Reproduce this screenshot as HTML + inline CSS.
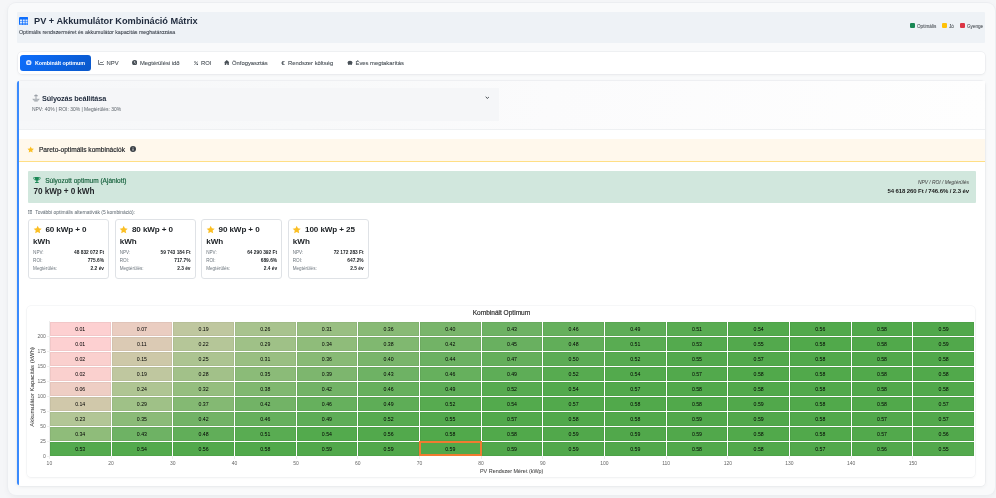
<!DOCTYPE html>
<html><head><meta charset="utf-8">
<style>
*{box-sizing:border-box;margin:0;padding:0}
html,body{width:996px;height:498px;overflow:hidden;background:#f5f6f8;font-family:"Liberation Sans",sans-serif;color:#212529}
.abs{position:absolute}
.t{position:absolute;white-space:nowrap;line-height:1}
#outer{position:absolute;left:7.5px;top:3px;width:987px;height:492px;background:#f9fafb;border-radius:8px;box-shadow:0 0 0 1px #eceef1,0 2px 6px rgba(0,0,0,0.05)}
#hdr{position:absolute;left:17px;top:12px;width:968px;height:30.5px;background:#eef2f6;border-radius:1px}
#nav{position:absolute;left:17.5px;top:52px;width:967.5px;height:22px;background:#fff;border-radius:4px;box-shadow:0 0 0 0.5px #e6e8eb,0 1px 3px rgba(0,0,0,0.06)}
#btn{position:absolute;left:20.3px;top:54.5px;width:70.7px;height:16px;border-radius:3px;background:linear-gradient(135deg,#0d6efd,#0a58ca)}
.tab{position:absolute;top:61.0px;font-size:5.85px;color:#495057;line-height:1;white-space:nowrap;-webkit-text-stroke:0.1px #495057}
#main{position:absolute;left:17px;top:80.5px;width:968px;height:405px;background:#fff;border-radius:4px;box-shadow:0 0 0 0.5px #e6e8eb,0 1px 4px rgba(0,0,0,0.06);overflow:hidden}
#mainbar{position:absolute;left:17px;top:81px;width:2px;height:404px;background:#3b8bfd;border-radius:2px 0 0 2px}
#wt{position:absolute;left:19px;top:80.5px;width:966px;height:49.3px;background:linear-gradient(100deg,#f6f7f9 0%,#f8f9fa 30%,#fbfbfc 55%,#fefefe 100%);border-bottom:0.6px solid #eef0f2}
#wpanel{position:absolute;left:19px;top:87.6px;width:480px;height:33.2px;background:#f5f6f8}
#pareto{position:absolute;left:19px;top:138.7px;width:966px;height:23.4px;background:#fff8ec;border-bottom:1px solid #ffdf85}
#green{position:absolute;left:27.7px;top:170.8px;width:948px;height:31.8px;background:#d1e7dd;border-radius:1px}
.acard{position:absolute;top:219px;width:81.3px;height:59.8px;background:#fff;border:0.7px solid #dfe2e6;border-radius:3px}
.astar{position:absolute;left:3.7px;top:5.0px;width:9.4px;height:9.4px}
.at1{position:absolute;left:16.4px;top:6px;font-size:8.1px;letter-spacing:-0.1px;font-weight:bold;line-height:1;white-space:nowrap;color:#212529}
.at2{position:absolute;left:4.1px;top:17.5px;font-size:8.1px;font-weight:bold;line-height:1;white-space:nowrap;color:#212529}
.arow{position:absolute;left:4.1px;right:4.3px;height:6px;font-size:4.6px;line-height:1;color:#6c757d;white-space:nowrap}
.arow span{position:absolute;left:0;top:0}
.arow b{position:absolute;right:0;top:0;color:#212529;font-weight:bold;font-size:4.82px;top:-0.1px}
#chart{position:absolute;left:27.2px;top:305.5px;width:948px;height:171px;background:#fff;border-radius:4px;box-shadow:0 0 0 0.5px #eef0f2,0 1px 3px rgba(0,0,0,0.05)}
.cell{position:absolute;border:0.8px solid;display:flex;align-items:center;justify-content:center}
.cell span{font-size:5.2px;color:#000;line-height:1;white-space:nowrap;position:relative;top:0.5px;color:#000}
.xt{position:absolute;top:460.8px;width:20px;text-align:center;font-size:5px;color:#666;line-height:1}
.xtick{position:absolute;top:455.7px;width:0.5px;height:3px;background:#eee}
.yt{position:absolute;left:26px;width:19.8px;text-align:right;font-size:5px;color:#666;line-height:1}
.ytick{position:absolute;left:46.5px;width:3.5px;height:0.5px;background:#eee}
#wrap{position:absolute;left:0;top:0;width:996px;height:498px;will-change:transform}
</style></head><body><div id="wrap">
<div id="outer"></div>
<div id="hdr"></div>
<svg class="abs" style="left:18.9px;top:16.9px;width:9.5px;height:8.2px" viewBox="0 0 19 16"><rect x="0" y="0" width="19" height="16" rx="2.5" fill="#0d6efd"/><g fill="#fff"><rect x="2" y="5" width="4" height="2.5"/><rect x="7.5" y="5" width="4" height="2.5"/><rect x="13" y="5" width="4" height="2.5"/><rect x="2" y="9" width="4" height="2.5"/><rect x="7.5" y="9" width="4" height="2.5"/><rect x="13" y="9" width="4" height="2.5"/><rect x="2" y="13" width="4" height="1.5"/><rect x="7.5" y="13" width="4" height="1.5"/><rect x="13" y="13" width="4" height="1.5"/></g></svg>
<div class="t" id="title" style="left:33.6px;top:16.0px;font-size:9.8px;font-weight:bold;color:#1f2a3c;transform:scaleX(0.94);transform-origin:0 0">PV + Akkumulátor Kombináció Mátrix</div>
<div class="t" id="sub" style="left:19px;top:29.9px;font-size:5.3px;color:#2f3640;-webkit-text-stroke:0.05px #2f3640;letter-spacing:-0.01px">Optimális rendszerméret és akkumulátor kapacitás meghatározása</div>
<div class="abs" style="left:910px;top:23.2px;width:4.8px;height:4.8px;background:#198754;border-radius:1.1px"></div>
<div class="t" style="left:917px;top:24.6px;font-size:4.62px;color:#343a40;-webkit-text-stroke:0.03px #343a40">Optimális</div>
<div class="abs" style="left:942px;top:23.2px;width:4.8px;height:4.8px;background:#ffc107;border-radius:1.1px"></div>
<div class="t" style="left:949px;top:24.6px;font-size:4.62px;color:#343a40;-webkit-text-stroke:0.03px #343a40">Jó</div>
<div class="abs" style="left:960px;top:23.2px;width:4.8px;height:4.8px;background:#dc3545;border-radius:1.1px"></div>
<div class="t" style="left:967px;top:24.6px;font-size:4.62px;color:#343a40;-webkit-text-stroke:0.03px #343a40">Gyenge</div>

<div id="nav"></div>
<div id="btn"></div>
<svg class="abs" style="left:26px;top:59.8px;width:5.5px;height:5.5px" viewBox="0 0 10 10"><circle cx="5" cy="5" r="5" fill="#d6e4ff"/><circle cx="5" cy="5" r="2.2" fill="#4d8ffd"/></svg>
<div class="tab" style="left:34.9px;top:60.8px;color:#fff;font-weight:bold;font-size:5.4px;-webkit-text-stroke:0;letter-spacing:-0.03px">Kombinált optimum</div>
<svg class="abs" style="left:98px;top:59.8px;width:6px;height:5px" viewBox="0 0 12 10"><path d="M1 0v9h11" stroke="#495057" stroke-width="1.4" fill="none"/><path d="M3 7l3-3 2 2 3-3" stroke="#495057" stroke-width="1.4" fill="none"/></svg>
<div class="tab" style="left:106.6px">NPV</div>
<svg class="abs" style="left:131.8px;top:59.5px;width:5.3px;height:5.3px" viewBox="0 0 10 10"><circle cx="5" cy="5" r="5" fill="#495057"/><path d="M5 2v3.2l2 1.3" stroke="#fff" stroke-width="1.2" fill="none"/></svg>
<div class="tab" style="left:139.9px">Megtérülési idő</div>
<svg class="abs" style="left:193.8px;top:60.6px;width:4.3px;height:4.3px" viewBox="0 0 10 10"><path d="M9 1L1 9" stroke="#495057" stroke-width="1.8"/><circle cx="2.3" cy="2.3" r="1.9" fill="#495057"/><circle cx="7.7" cy="7.7" r="1.9" fill="#495057"/></svg>
<div class="tab" style="left:201px">ROI</div>
<svg class="abs" style="left:223.6px;top:59.6px;width:5.6px;height:5.2px" viewBox="0 0 12 11"><path d="M6 0L0 5.5h1.6V11h3.2V7.5h2.4V11h3.2V5.5H12z" fill="#495057"/></svg>
<div class="tab" style="left:232px">Önfogyasztás</div>
<div class="tab" style="left:281.5px;font-weight:bold">€</div>
<div class="tab" style="left:288px">Rendszer költség</div>
<svg class="abs" style="left:347px;top:59.8px;width:6px;height:5px" viewBox="0 0 12 10"><ellipse cx="6" cy="5.5" rx="5" ry="4" fill="#495057"/><rect x="2.5" y="7" width="2" height="3" fill="#495057"/><rect x="7.5" y="7" width="2" height="3" fill="#495057"/></svg>
<div class="tab" style="left:355.5px">Éves megtakarítás</div>

<div id="main"></div>
<div id="wt"></div>
<div id="wpanel"></div>
<div id="mainbar"></div>
<svg class="abs" style="left:32px;top:94px;width:8px;height:8px" viewBox="0 0 16 16"><path d="M8 1.5v10M4 3.5h8" stroke="#7d848c" stroke-width="1.3" fill="none"/><circle cx="8" cy="2" r="1.2" fill="#7d848c"/><path d="M1.5 10.5c1 3.5 12 3.5 13 0z" fill="#d5d9de" stroke="#7d848c" stroke-width="1"/><path d="M4.5 13.5h7v1.5h-7z" fill="#9aa0a6"/></svg>
<div class="t" id="wtitle" style="left:42px;top:95.2px;font-size:7.3px;letter-spacing:-0.15px;font-weight:bold;color:#1f2a3c">Súlyozás beállítása</div>
<div class="t" id="wsub" style="left:32px;top:108.2px;font-size:4.95px;color:#5f666d;-webkit-text-stroke:0.01px #5f666d">NPV: 40% | ROI: 30% | Megtérülés: 30%</div>
<svg class="abs" style="left:484.5px;top:96px;width:4.8px;height:3.4px" viewBox="0 0 8 6"><path d="M1 1.2l3 3.3 3-3.3" stroke="#343a40" stroke-width="1.5" fill="none"/></svg>

<div id="pareto"></div>
<svg class="abs" style="left:27.3px;top:145.9px;width:7.4px;height:7.4px" viewBox="0 0 24 24"><path d="M12 1.8l3.1 6.6 7.2.9-5.3 5 1.4 7.1L12 17.9l-6.4 3.5 1.4-7.1-5.3-5 7.2-.9z" fill="#fbbf24"/></svg>
<div class="t" id="ptitle" style="left:38.9px;top:147.1px;font-size:6.6px;color:#1c1f23;-webkit-text-stroke:0.16px #1c1f23">Pareto-optimális kombinációk</div>
<svg class="abs" style="left:129.9px;top:146.4px;width:6px;height:6px" viewBox="0 0 10 10"><circle cx="5" cy="5" r="5" fill="#3a3f45"/><rect x="4.3" y="4.2" width="1.4" height="3.6" fill="#fff"/><circle cx="5" cy="2.7" r="0.8" fill="#fff"/></svg>

<div id="green"></div>
<svg class="abs" style="left:33.3px;top:176.8px;width:7.8px;height:6.2px" viewBox="0 0 16 12.5"><path d="M4 0h8v4.2a4 4 0 0 1-8 0z" fill="#198754"/><path d="M4.2 1.3H1.2v1.3c0 1.7 1.5 3 3.3 3M11.8 1.3h3v1.3c0 1.7-1.5 3-3.3 3" stroke="#198754" stroke-width="1.5" fill="none"/><rect x="6.8" y="7.5" width="2.4" height="2.6" fill="#198754"/><rect x="4.3" y="10" width="7.4" height="2.5" rx="0.6" fill="#198754"/></svg>
<div class="t" id="gtitle" style="left:45.2px;top:177.7px;font-size:6.5px;color:#135f3a;-webkit-text-stroke:0.16px #135f3a">Súlyozott optimum (Ajánlott)</div>
<div class="t" id="gval" style="left:33.6px;top:187.7px;font-size:8.2px;letter-spacing:-0.1px;font-weight:bold;color:#25282c">70 kWp + 0 kWh</div>
<div class="t" id="grl" style="right:27px;top:181px;font-size:4.9px;color:#444;font-style:italic;-webkit-text-stroke:0.03px #444">NPV / ROI / Megtérülés</div>
<div class="t" id="grv" style="right:27px;top:188.3px;font-size:6px;font-weight:bold;color:#1a1a1a;letter-spacing:-0.09px">54 618 260 Ft / 746.6% / 2.3 év</div>

<svg class="abs" style="left:27.7px;top:210.3px;width:4.4px;height:3.8px" viewBox="0 0 9 7"><g fill="#6c757d"><rect x="0" y="0" width="2" height="1.6"/><rect x="3" y="0" width="6" height="1.6"/><rect x="0" y="2.7" width="2" height="1.6"/><rect x="3" y="2.7" width="6" height="1.6"/><rect x="0" y="5.4" width="2" height="1.6"/><rect x="3" y="5.4" width="6" height="1.6"/></g></svg>
<div class="t" id="alt" style="left:35.2px;top:210.6px;font-size:4.95px;color:#6c757d;-webkit-text-stroke:0.05px #6c757d">További optimális alternatívák (5 kombináció):</div>
<div class="acard" style="left:28.00px">
  <svg class="astar" viewBox="0 0 24 24"><path d="M12 1.8l3.1 6.6 7.2.9-5.3 5 1.4 7.1L12 17.9l-6.4 3.5 1.4-7.1-5.3-5 7.2-.9z" fill="#fbbf24"/></svg>
  <div class="at1">60 kWp + 0</div><div class="at2">kWh</div>
  <div class="arow" style="top:31.2px"><span>NPV:</span><b>48 832 072 Ft</b></div>
  <div class="arow" style="top:39.2px"><span>ROI:</span><b>775.6%</b></div>
  <div class="arow" style="top:47.2px"><span>Megtérülés:</span><b>2.2 év</b></div>
</div>
<div class="acard" style="left:114.55px">
  <svg class="astar" viewBox="0 0 24 24"><path d="M12 1.8l3.1 6.6 7.2.9-5.3 5 1.4 7.1L12 17.9l-6.4 3.5 1.4-7.1-5.3-5 7.2-.9z" fill="#fbbf24"/></svg>
  <div class="at1">80 kWp + 0</div><div class="at2">kWh</div>
  <div class="arow" style="top:31.2px"><span>NPV:</span><b>59 743 184 Ft</b></div>
  <div class="arow" style="top:39.2px"><span>ROI:</span><b>717.7%</b></div>
  <div class="arow" style="top:47.2px"><span>Megtérülés:</span><b>2.3 év</b></div>
</div>
<div class="acard" style="left:201.10px">
  <svg class="astar" viewBox="0 0 24 24"><path d="M12 1.8l3.1 6.6 7.2.9-5.3 5 1.4 7.1L12 17.9l-6.4 3.5 1.4-7.1-5.3-5 7.2-.9z" fill="#fbbf24"/></svg>
  <div class="at1">90 kWp + 0</div><div class="at2">kWh</div>
  <div class="arow" style="top:31.2px"><span>NPV:</span><b>64 290 392 Ft</b></div>
  <div class="arow" style="top:39.2px"><span>ROI:</span><b>689.6%</b></div>
  <div class="arow" style="top:47.2px"><span>Megtérülés:</span><b>2.4 év</b></div>
</div>
<div class="acard" style="left:287.65px">
  <svg class="astar" viewBox="0 0 24 24"><path d="M12 1.8l3.1 6.6 7.2.9-5.3 5 1.4 7.1L12 17.9l-6.4 3.5 1.4-7.1-5.3-5 7.2-.9z" fill="#fbbf24"/></svg>
  <div class="at1">100 kWp + 25</div><div class="at2">kWh</div>
  <div class="arow" style="top:31.2px"><span>NPV:</span><b>72 172 283 Ft</b></div>
  <div class="arow" style="top:39.2px"><span>ROI:</span><b>647.2%</b></div>
  <div class="arow" style="top:47.2px"><span>Megtérülés:</span><b>2.5 év</b></div>
</div>

<div id="chart"></div>
<div class="t" id="ctitle" style="left:472.7px;top:310.2px;font-size:6.55px;color:#333;-webkit-text-stroke:0.2px #333">Kombinált Optimum</div>
<div class="cell" style="left:49.90px;top:321.70px;width:60.67px;height:13.99px;background:rgb(253,208,209);border-color:rgb(242,199,200)"><span>0.01</span></div>
<div class="cell" style="left:49.90px;top:336.69px;width:60.67px;height:13.99px;background:rgb(253,208,209);border-color:rgb(242,199,200)"><span>0.01</span></div>
<div class="cell" style="left:49.90px;top:351.68px;width:60.67px;height:13.99px;background:rgb(250,208,206);border-color:rgb(240,199,197)"><span>0.02</span></div>
<div class="cell" style="left:49.90px;top:366.67px;width:60.67px;height:13.99px;background:rgb(250,208,206);border-color:rgb(240,199,197)"><span>0.02</span></div>
<div class="cell" style="left:49.90px;top:381.66px;width:60.67px;height:13.99px;background:rgb(238,206,196);border-color:rgb(228,197,188)"><span>0.06</span></div>
<div class="cell" style="left:49.90px;top:396.64px;width:60.67px;height:13.99px;background:rgb(208,200,170);border-color:rgb(199,192,163)"><span>0.14</span></div>
<div class="cell" style="left:49.90px;top:411.63px;width:60.67px;height:13.99px;background:rgb(178,198,150);border-color:rgb(170,190,144)"><span>0.23</span></div>
<div class="cell" style="left:49.90px;top:426.62px;width:60.67px;height:13.99px;background:rgb(143,188,122);border-color:rgb(137,180,117)"><span>0.34</span></div>
<div class="cell" style="left:49.90px;top:441.61px;width:60.67px;height:13.99px;background:rgb(84,170,78);border-color:rgb(80,163,74)"><span>0.53</span></div>
<div class="cell" style="left:111.57px;top:321.70px;width:60.67px;height:13.99px;background:rgb(234,205,193);border-color:rgb(224,196,185)"><span>0.07</span></div>
<div class="cell" style="left:111.57px;top:336.69px;width:60.67px;height:13.99px;background:rgb(219,202,180);border-color:rgb(210,193,172)"><span>0.11</span></div>
<div class="cell" style="left:111.57px;top:351.68px;width:60.67px;height:13.99px;background:rgb(205,200,168);border-color:rgb(196,192,161)"><span>0.15</span></div>
<div class="cell" style="left:111.57px;top:366.67px;width:60.67px;height:13.99px;background:rgb(191,199,159);border-color:rgb(183,191,152)"><span>0.19</span></div>
<div class="cell" style="left:111.57px;top:381.66px;width:60.67px;height:13.99px;background:rgb(175,197,147);border-color:rgb(168,189,141)"><span>0.24</span></div>
<div class="cell" style="left:111.57px;top:396.64px;width:60.67px;height:13.99px;background:rgb(159,193,135);border-color:rgb(152,185,129)"><span>0.29</span></div>
<div class="cell" style="left:111.57px;top:411.63px;width:60.67px;height:13.99px;background:rgb(139,187,120);border-color:rgb(133,179,115)"><span>0.35</span></div>
<div class="cell" style="left:111.57px;top:426.62px;width:60.67px;height:13.99px;background:rgb(110,178,100);border-color:rgb(105,170,96)"><span>0.43</span></div>
<div class="cell" style="left:111.57px;top:441.61px;width:60.67px;height:13.99px;background:rgb(83,170,77);border-color:rgb(79,163,73)"><span>0.54</span></div>
<div class="cell" style="left:173.25px;top:321.70px;width:60.67px;height:13.99px;background:rgb(191,199,159);border-color:rgb(183,191,152)"><span>0.19</span></div>
<div class="cell" style="left:173.25px;top:336.69px;width:60.67px;height:13.99px;background:rgb(181,198,152);border-color:rgb(173,190,145)"><span>0.22</span></div>
<div class="cell" style="left:173.25px;top:351.68px;width:60.67px;height:13.99px;background:rgb(172,196,145);border-color:rgb(165,188,139)"><span>0.25</span></div>
<div class="cell" style="left:173.25px;top:366.67px;width:60.67px;height:13.99px;background:rgb(162,193,137);border-color:rgb(155,185,131)"><span>0.28</span></div>
<div class="cell" style="left:173.25px;top:381.66px;width:60.67px;height:13.99px;background:rgb(149,190,127);border-color:rgb(143,182,121)"><span>0.32</span></div>
<div class="cell" style="left:173.25px;top:396.64px;width:60.67px;height:13.99px;background:rgb(132,185,115);border-color:rgb(126,177,110)"><span>0.37</span></div>
<div class="cell" style="left:173.25px;top:411.63px;width:60.67px;height:13.99px;background:rgb(114,179,102);border-color:rgb(109,171,97)"><span>0.42</span></div>
<div class="cell" style="left:173.25px;top:426.62px;width:60.67px;height:13.99px;background:rgb(97,174,89);border-color:rgb(93,167,85)"><span>0.48</span></div>
<div class="cell" style="left:173.25px;top:441.61px;width:60.67px;height:13.99px;background:rgb(82,169,76);border-color:rgb(78,162,72)"><span>0.56</span></div>
<div class="cell" style="left:234.92px;top:321.70px;width:60.67px;height:13.99px;background:rgb(168,195,142);border-color:rgb(161,187,136)"><span>0.26</span></div>
<div class="cell" style="left:234.92px;top:336.69px;width:60.67px;height:13.99px;background:rgb(159,193,135);border-color:rgb(152,185,129)"><span>0.29</span></div>
<div class="cell" style="left:234.92px;top:351.68px;width:60.67px;height:13.99px;background:rgb(153,191,130);border-color:rgb(146,183,124)"><span>0.31</span></div>
<div class="cell" style="left:234.92px;top:366.67px;width:60.67px;height:13.99px;background:rgb(139,187,120);border-color:rgb(133,179,115)"><span>0.35</span></div>
<div class="cell" style="left:234.92px;top:381.66px;width:60.67px;height:13.99px;background:rgb(128,184,112);border-color:rgb(122,176,107)"><span>0.38</span></div>
<div class="cell" style="left:234.92px;top:396.64px;width:60.67px;height:13.99px;background:rgb(114,179,102);border-color:rgb(109,171,97)"><span>0.42</span></div>
<div class="cell" style="left:234.92px;top:411.63px;width:60.67px;height:13.99px;background:rgb(102,176,93);border-color:rgb(97,168,89)"><span>0.46</span></div>
<div class="cell" style="left:234.92px;top:426.62px;width:60.67px;height:13.99px;background:rgb(89,172,82);border-color:rgb(85,165,78)"><span>0.51</span></div>
<div class="cell" style="left:234.92px;top:441.61px;width:60.67px;height:13.99px;background:rgb(81,169,75);border-color:rgb(77,162,72)"><span>0.58</span></div>
<div class="cell" style="left:296.59px;top:321.70px;width:60.67px;height:13.99px;background:rgb(153,191,130);border-color:rgb(146,183,124)"><span>0.31</span></div>
<div class="cell" style="left:296.59px;top:336.69px;width:60.67px;height:13.99px;background:rgb(143,188,122);border-color:rgb(137,180,117)"><span>0.34</span></div>
<div class="cell" style="left:296.59px;top:351.68px;width:60.67px;height:13.99px;background:rgb(136,186,117);border-color:rgb(130,178,112)"><span>0.36</span></div>
<div class="cell" style="left:296.59px;top:366.67px;width:60.67px;height:13.99px;background:rgb(125,182,110);border-color:rgb(120,174,105)"><span>0.39</span></div>
<div class="cell" style="left:296.59px;top:381.66px;width:60.67px;height:13.99px;background:rgb(114,179,102);border-color:rgb(109,171,97)"><span>0.42</span></div>
<div class="cell" style="left:296.59px;top:396.64px;width:60.67px;height:13.99px;background:rgb(102,176,93);border-color:rgb(97,168,89)"><span>0.46</span></div>
<div class="cell" style="left:296.59px;top:411.63px;width:60.67px;height:13.99px;background:rgb(94,173,87);border-color:rgb(90,166,83)"><span>0.49</span></div>
<div class="cell" style="left:296.59px;top:426.62px;width:60.67px;height:13.99px;background:rgb(83,170,77);border-color:rgb(79,163,73)"><span>0.54</span></div>
<div class="cell" style="left:296.59px;top:441.61px;width:60.67px;height:13.99px;background:rgb(81,168,75);border-color:rgb(77,161,72)"><span>0.59</span></div>
<div class="cell" style="left:358.27px;top:321.70px;width:60.67px;height:13.99px;background:rgb(136,186,117);border-color:rgb(130,178,112)"><span>0.36</span></div>
<div class="cell" style="left:358.27px;top:336.69px;width:60.67px;height:13.99px;background:rgb(128,184,112);border-color:rgb(122,176,107)"><span>0.38</span></div>
<div class="cell" style="left:358.27px;top:351.68px;width:60.67px;height:13.99px;background:rgb(121,181,107);border-color:rgb(116,173,102)"><span>0.40</span></div>
<div class="cell" style="left:358.27px;top:366.67px;width:60.67px;height:13.99px;background:rgb(110,178,100);border-color:rgb(105,170,96)"><span>0.43</span></div>
<div class="cell" style="left:358.27px;top:381.66px;width:60.67px;height:13.99px;background:rgb(102,176,93);border-color:rgb(97,168,89)"><span>0.46</span></div>
<div class="cell" style="left:358.27px;top:396.64px;width:60.67px;height:13.99px;background:rgb(94,173,87);border-color:rgb(90,166,83)"><span>0.49</span></div>
<div class="cell" style="left:358.27px;top:411.63px;width:60.67px;height:13.99px;background:rgb(87,171,80);border-color:rgb(83,164,76)"><span>0.52</span></div>
<div class="cell" style="left:358.27px;top:426.62px;width:60.67px;height:13.99px;background:rgb(82,169,76);border-color:rgb(78,162,72)"><span>0.56</span></div>
<div class="cell" style="left:358.27px;top:441.61px;width:60.67px;height:13.99px;background:rgb(81,168,75);border-color:rgb(77,161,72)"><span>0.59</span></div>
<div class="cell" style="left:419.94px;top:321.70px;width:60.67px;height:13.99px;background:rgb(121,181,107);border-color:rgb(116,173,102)"><span>0.40</span></div>
<div class="cell" style="left:419.94px;top:336.69px;width:60.67px;height:13.99px;background:rgb(114,179,102);border-color:rgb(109,171,97)"><span>0.42</span></div>
<div class="cell" style="left:419.94px;top:351.68px;width:60.67px;height:13.99px;background:rgb(107,177,98);border-color:rgb(102,169,94)"><span>0.44</span></div>
<div class="cell" style="left:419.94px;top:366.67px;width:60.67px;height:13.99px;background:rgb(102,176,93);border-color:rgb(97,168,89)"><span>0.46</span></div>
<div class="cell" style="left:419.94px;top:381.66px;width:60.67px;height:13.99px;background:rgb(94,173,87);border-color:rgb(90,166,83)"><span>0.49</span></div>
<div class="cell" style="left:419.94px;top:396.64px;width:60.67px;height:13.99px;background:rgb(87,171,80);border-color:rgb(83,164,76)"><span>0.52</span></div>
<div class="cell" style="left:419.94px;top:411.63px;width:60.67px;height:13.99px;background:rgb(83,169,77);border-color:rgb(79,162,73)"><span>0.55</span></div>
<div class="cell" style="left:419.94px;top:426.62px;width:60.67px;height:13.99px;background:rgb(81,169,75);border-color:rgb(77,162,72)"><span>0.58</span></div>
<div class="cell" style="left:419.94px;top:441.61px;width:60.67px;height:13.99px;background:rgb(81,168,75);border-color:rgb(77,161,72)"><span>0.59</span></div>
<div class="cell" style="left:481.61px;top:321.70px;width:60.67px;height:13.99px;background:rgb(110,178,100);border-color:rgb(105,170,96)"><span>0.43</span></div>
<div class="cell" style="left:481.61px;top:336.69px;width:60.67px;height:13.99px;background:rgb(105,176,96);border-color:rgb(100,168,92)"><span>0.45</span></div>
<div class="cell" style="left:481.61px;top:351.68px;width:60.67px;height:13.99px;background:rgb(100,175,91);border-color:rgb(96,168,87)"><span>0.47</span></div>
<div class="cell" style="left:481.61px;top:366.67px;width:60.67px;height:13.99px;background:rgb(94,173,87);border-color:rgb(90,166,83)"><span>0.49</span></div>
<div class="cell" style="left:481.61px;top:381.66px;width:60.67px;height:13.99px;background:rgb(87,171,80);border-color:rgb(83,164,76)"><span>0.52</span></div>
<div class="cell" style="left:481.61px;top:396.64px;width:60.67px;height:13.99px;background:rgb(83,170,77);border-color:rgb(79,163,73)"><span>0.54</span></div>
<div class="cell" style="left:481.61px;top:411.63px;width:60.67px;height:13.99px;background:rgb(82,169,76);border-color:rgb(78,162,72)"><span>0.57</span></div>
<div class="cell" style="left:481.61px;top:426.62px;width:60.67px;height:13.99px;background:rgb(81,169,75);border-color:rgb(77,162,72)"><span>0.58</span></div>
<div class="cell" style="left:481.61px;top:441.61px;width:60.67px;height:13.99px;background:rgb(81,168,75);border-color:rgb(77,161,72)"><span>0.59</span></div>
<div class="cell" style="left:543.29px;top:321.70px;width:60.67px;height:13.99px;background:rgb(102,176,93);border-color:rgb(97,168,89)"><span>0.46</span></div>
<div class="cell" style="left:543.29px;top:336.69px;width:60.67px;height:13.99px;background:rgb(97,174,89);border-color:rgb(93,167,85)"><span>0.48</span></div>
<div class="cell" style="left:543.29px;top:351.68px;width:60.67px;height:13.99px;background:rgb(92,172,85);border-color:rgb(88,165,81)"><span>0.50</span></div>
<div class="cell" style="left:543.29px;top:366.67px;width:60.67px;height:13.99px;background:rgb(87,171,80);border-color:rgb(83,164,76)"><span>0.52</span></div>
<div class="cell" style="left:543.29px;top:381.66px;width:60.67px;height:13.99px;background:rgb(83,170,77);border-color:rgb(79,163,73)"><span>0.54</span></div>
<div class="cell" style="left:543.29px;top:396.64px;width:60.67px;height:13.99px;background:rgb(82,169,76);border-color:rgb(78,162,72)"><span>0.57</span></div>
<div class="cell" style="left:543.29px;top:411.63px;width:60.67px;height:13.99px;background:rgb(81,169,75);border-color:rgb(77,162,72)"><span>0.58</span></div>
<div class="cell" style="left:543.29px;top:426.62px;width:60.67px;height:13.99px;background:rgb(81,168,75);border-color:rgb(77,161,72)"><span>0.59</span></div>
<div class="cell" style="left:543.29px;top:441.61px;width:60.67px;height:13.99px;background:rgb(81,168,75);border-color:rgb(77,161,72)"><span>0.59</span></div>
<div class="cell" style="left:604.96px;top:321.70px;width:60.67px;height:13.99px;background:rgb(94,173,87);border-color:rgb(90,166,83)"><span>0.49</span></div>
<div class="cell" style="left:604.96px;top:336.69px;width:60.67px;height:13.99px;background:rgb(89,172,82);border-color:rgb(85,165,78)"><span>0.51</span></div>
<div class="cell" style="left:604.96px;top:351.68px;width:60.67px;height:13.99px;background:rgb(87,171,80);border-color:rgb(83,164,76)"><span>0.52</span></div>
<div class="cell" style="left:604.96px;top:366.67px;width:60.67px;height:13.99px;background:rgb(83,170,77);border-color:rgb(79,163,73)"><span>0.54</span></div>
<div class="cell" style="left:604.96px;top:381.66px;width:60.67px;height:13.99px;background:rgb(82,169,76);border-color:rgb(78,162,72)"><span>0.57</span></div>
<div class="cell" style="left:604.96px;top:396.64px;width:60.67px;height:13.99px;background:rgb(81,169,75);border-color:rgb(77,162,72)"><span>0.58</span></div>
<div class="cell" style="left:604.96px;top:411.63px;width:60.67px;height:13.99px;background:rgb(81,169,75);border-color:rgb(77,162,72)"><span>0.58</span></div>
<div class="cell" style="left:604.96px;top:426.62px;width:60.67px;height:13.99px;background:rgb(81,168,75);border-color:rgb(77,161,72)"><span>0.59</span></div>
<div class="cell" style="left:604.96px;top:441.61px;width:60.67px;height:13.99px;background:rgb(81,168,75);border-color:rgb(77,161,72)"><span>0.59</span></div>
<div class="cell" style="left:666.63px;top:321.70px;width:60.67px;height:13.99px;background:rgb(89,172,82);border-color:rgb(85,165,78)"><span>0.51</span></div>
<div class="cell" style="left:666.63px;top:336.69px;width:60.67px;height:13.99px;background:rgb(84,170,78);border-color:rgb(80,163,74)"><span>0.53</span></div>
<div class="cell" style="left:666.63px;top:351.68px;width:60.67px;height:13.99px;background:rgb(83,169,77);border-color:rgb(79,162,73)"><span>0.55</span></div>
<div class="cell" style="left:666.63px;top:366.67px;width:60.67px;height:13.99px;background:rgb(82,169,76);border-color:rgb(78,162,72)"><span>0.57</span></div>
<div class="cell" style="left:666.63px;top:381.66px;width:60.67px;height:13.99px;background:rgb(81,169,75);border-color:rgb(77,162,72)"><span>0.58</span></div>
<div class="cell" style="left:666.63px;top:396.64px;width:60.67px;height:13.99px;background:rgb(81,169,75);border-color:rgb(77,162,72)"><span>0.58</span></div>
<div class="cell" style="left:666.63px;top:411.63px;width:60.67px;height:13.99px;background:rgb(81,168,75);border-color:rgb(77,161,72)"><span>0.59</span></div>
<div class="cell" style="left:666.63px;top:426.62px;width:60.67px;height:13.99px;background:rgb(81,168,75);border-color:rgb(77,161,72)"><span>0.59</span></div>
<div class="cell" style="left:666.63px;top:441.61px;width:60.67px;height:13.99px;background:rgb(81,169,75);border-color:rgb(77,162,72)"><span>0.58</span></div>
<div class="cell" style="left:728.31px;top:321.70px;width:60.67px;height:13.99px;background:rgb(83,170,77);border-color:rgb(79,163,73)"><span>0.54</span></div>
<div class="cell" style="left:728.31px;top:336.69px;width:60.67px;height:13.99px;background:rgb(83,169,77);border-color:rgb(79,162,73)"><span>0.55</span></div>
<div class="cell" style="left:728.31px;top:351.68px;width:60.67px;height:13.99px;background:rgb(82,169,76);border-color:rgb(78,162,72)"><span>0.57</span></div>
<div class="cell" style="left:728.31px;top:366.67px;width:60.67px;height:13.99px;background:rgb(81,169,75);border-color:rgb(77,162,72)"><span>0.58</span></div>
<div class="cell" style="left:728.31px;top:381.66px;width:60.67px;height:13.99px;background:rgb(81,169,75);border-color:rgb(77,162,72)"><span>0.58</span></div>
<div class="cell" style="left:728.31px;top:396.64px;width:60.67px;height:13.99px;background:rgb(81,168,75);border-color:rgb(77,161,72)"><span>0.59</span></div>
<div class="cell" style="left:728.31px;top:411.63px;width:60.67px;height:13.99px;background:rgb(81,168,75);border-color:rgb(77,161,72)"><span>0.59</span></div>
<div class="cell" style="left:728.31px;top:426.62px;width:60.67px;height:13.99px;background:rgb(81,169,75);border-color:rgb(77,162,72)"><span>0.58</span></div>
<div class="cell" style="left:728.31px;top:441.61px;width:60.67px;height:13.99px;background:rgb(81,169,75);border-color:rgb(77,162,72)"><span>0.58</span></div>
<div class="cell" style="left:789.98px;top:321.70px;width:60.67px;height:13.99px;background:rgb(82,169,76);border-color:rgb(78,162,72)"><span>0.56</span></div>
<div class="cell" style="left:789.98px;top:336.69px;width:60.67px;height:13.99px;background:rgb(81,169,75);border-color:rgb(77,162,72)"><span>0.58</span></div>
<div class="cell" style="left:789.98px;top:351.68px;width:60.67px;height:13.99px;background:rgb(81,169,75);border-color:rgb(77,162,72)"><span>0.58</span></div>
<div class="cell" style="left:789.98px;top:366.67px;width:60.67px;height:13.99px;background:rgb(81,169,75);border-color:rgb(77,162,72)"><span>0.58</span></div>
<div class="cell" style="left:789.98px;top:381.66px;width:60.67px;height:13.99px;background:rgb(81,169,75);border-color:rgb(77,162,72)"><span>0.58</span></div>
<div class="cell" style="left:789.98px;top:396.64px;width:60.67px;height:13.99px;background:rgb(81,169,75);border-color:rgb(77,162,72)"><span>0.58</span></div>
<div class="cell" style="left:789.98px;top:411.63px;width:60.67px;height:13.99px;background:rgb(81,169,75);border-color:rgb(77,162,72)"><span>0.58</span></div>
<div class="cell" style="left:789.98px;top:426.62px;width:60.67px;height:13.99px;background:rgb(81,169,75);border-color:rgb(77,162,72)"><span>0.58</span></div>
<div class="cell" style="left:789.98px;top:441.61px;width:60.67px;height:13.99px;background:rgb(82,169,76);border-color:rgb(78,162,72)"><span>0.57</span></div>
<div class="cell" style="left:851.65px;top:321.70px;width:60.67px;height:13.99px;background:rgb(81,169,75);border-color:rgb(77,162,72)"><span>0.58</span></div>
<div class="cell" style="left:851.65px;top:336.69px;width:60.67px;height:13.99px;background:rgb(81,169,75);border-color:rgb(77,162,72)"><span>0.58</span></div>
<div class="cell" style="left:851.65px;top:351.68px;width:60.67px;height:13.99px;background:rgb(81,169,75);border-color:rgb(77,162,72)"><span>0.58</span></div>
<div class="cell" style="left:851.65px;top:366.67px;width:60.67px;height:13.99px;background:rgb(81,169,75);border-color:rgb(77,162,72)"><span>0.58</span></div>
<div class="cell" style="left:851.65px;top:381.66px;width:60.67px;height:13.99px;background:rgb(81,169,75);border-color:rgb(77,162,72)"><span>0.58</span></div>
<div class="cell" style="left:851.65px;top:396.64px;width:60.67px;height:13.99px;background:rgb(81,169,75);border-color:rgb(77,162,72)"><span>0.58</span></div>
<div class="cell" style="left:851.65px;top:411.63px;width:60.67px;height:13.99px;background:rgb(82,169,76);border-color:rgb(78,162,72)"><span>0.57</span></div>
<div class="cell" style="left:851.65px;top:426.62px;width:60.67px;height:13.99px;background:rgb(82,169,76);border-color:rgb(78,162,72)"><span>0.57</span></div>
<div class="cell" style="left:851.65px;top:441.61px;width:60.67px;height:13.99px;background:rgb(82,169,76);border-color:rgb(78,162,72)"><span>0.56</span></div>
<div class="cell" style="left:913.33px;top:321.70px;width:60.67px;height:13.99px;background:rgb(81,168,75);border-color:rgb(77,161,72)"><span>0.59</span></div>
<div class="cell" style="left:913.33px;top:336.69px;width:60.67px;height:13.99px;background:rgb(81,168,75);border-color:rgb(77,161,72)"><span>0.59</span></div>
<div class="cell" style="left:913.33px;top:351.68px;width:60.67px;height:13.99px;background:rgb(81,169,75);border-color:rgb(77,162,72)"><span>0.58</span></div>
<div class="cell" style="left:913.33px;top:366.67px;width:60.67px;height:13.99px;background:rgb(81,169,75);border-color:rgb(77,162,72)"><span>0.58</span></div>
<div class="cell" style="left:913.33px;top:381.66px;width:60.67px;height:13.99px;background:rgb(81,169,75);border-color:rgb(77,162,72)"><span>0.58</span></div>
<div class="cell" style="left:913.33px;top:396.64px;width:60.67px;height:13.99px;background:rgb(82,169,76);border-color:rgb(78,162,72)"><span>0.57</span></div>
<div class="cell" style="left:913.33px;top:411.63px;width:60.67px;height:13.99px;background:rgb(82,169,76);border-color:rgb(78,162,72)"><span>0.57</span></div>
<div class="cell" style="left:913.33px;top:426.62px;width:60.67px;height:13.99px;background:rgb(82,169,76);border-color:rgb(78,162,72)"><span>0.56</span></div>
<div class="cell" style="left:913.33px;top:441.61px;width:60.67px;height:13.99px;background:rgb(83,169,77);border-color:rgb(79,162,73)"><span>0.55</span></div>
<div class="abs" style="left:419.2px;top:441.2px;width:62.5px;height:15.1px;border:2px solid #f07b30"></div>
<div class="xt" style="left:39.40px">10</div>
<div class="xtick" style="left:48.90px"></div>
<div class="xt" style="left:101.07px">20</div>
<div class="xtick" style="left:110.57px"></div>
<div class="xt" style="left:162.75px">30</div>
<div class="xtick" style="left:172.25px"></div>
<div class="xt" style="left:224.42px">40</div>
<div class="xtick" style="left:233.92px"></div>
<div class="xt" style="left:286.09px">50</div>
<div class="xtick" style="left:295.59px"></div>
<div class="xt" style="left:347.77px">60</div>
<div class="xtick" style="left:357.27px"></div>
<div class="xt" style="left:409.44px">70</div>
<div class="xtick" style="left:418.94px"></div>
<div class="xt" style="left:471.11px">80</div>
<div class="xtick" style="left:480.61px"></div>
<div class="xt" style="left:532.79px">90</div>
<div class="xtick" style="left:542.29px"></div>
<div class="xt" style="left:594.46px">100</div>
<div class="xtick" style="left:603.96px"></div>
<div class="xt" style="left:656.13px">110</div>
<div class="xtick" style="left:665.63px"></div>
<div class="xt" style="left:717.81px">120</div>
<div class="xtick" style="left:727.31px"></div>
<div class="xt" style="left:779.48px">130</div>
<div class="xtick" style="left:788.98px"></div>
<div class="xt" style="left:841.15px">140</div>
<div class="xtick" style="left:850.65px"></div>
<div class="xt" style="left:902.83px">150</div>
<div class="xtick" style="left:912.33px"></div>
<div class="yt" style="top:454.30px">0</div>
<div class="ytick" style="top:455.60px"></div>
<div class="yt" style="top:439.31px">25</div>
<div class="ytick" style="top:440.61px"></div>
<div class="yt" style="top:424.32px">50</div>
<div class="ytick" style="top:425.62px"></div>
<div class="yt" style="top:409.33px">75</div>
<div class="ytick" style="top:410.63px"></div>
<div class="yt" style="top:394.34px">100</div>
<div class="ytick" style="top:395.64px"></div>
<div class="yt" style="top:379.36px">125</div>
<div class="ytick" style="top:380.66px"></div>
<div class="yt" style="top:364.37px">150</div>
<div class="ytick" style="top:365.67px"></div>
<div class="yt" style="top:349.38px">175</div>
<div class="ytick" style="top:350.68px"></div>
<div class="yt" style="top:334.39px">200</div>
<div class="ytick" style="top:335.69px"></div>
<div class="abs" style="left:49.2px;top:320.6px;width:0.5px;height:135.6px;background:#ececec"></div>
<div class="t" id="xtitle" style="left:480px;top:468.7px;font-size:5.7px;color:#444;-webkit-text-stroke:0.05px #444;transform:scaleX(0.955);transform-origin:0 0">PV Rendszer Méret (kWp)</div>
<div class="t" id="ytitle" style="left:-8px;top:383.5px;font-size:6.05px;color:#444;-webkit-text-stroke:0.05px #444;transform:rotate(-90deg);transform-origin:50% 50%;width:80px;text-align:center">Akkumulátor Kapacitás (kWh)</div>
</div></body></html>
